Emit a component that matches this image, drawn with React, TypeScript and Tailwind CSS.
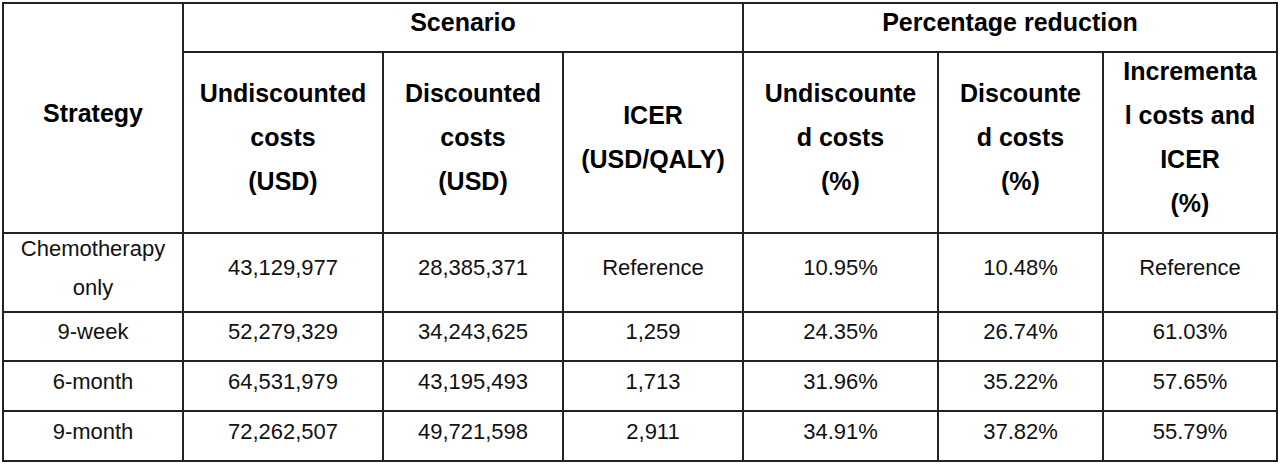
import { Fragment } from "react";

const rows = [
  { name: ["Chemotherapy", "only"], vals: ["43,129,977", "28,385,371", "Reference", "10.95%", "10.48%", "Reference"] },
  { name: ["9-week"], vals: ["52,279,329", "34,243,625", "1,259", "24.35%", "26.74%", "61.03%"] },
  { name: ["6-month"], vals: ["64,531,979", "43,195,493", "1,713", "31.96%", "35.22%", "57.65%"] },
  { name: ["9-month"], vals: ["72,262,507", "49,721,598", "2,911", "34.91%", "37.82%", "55.79%"] },
];

// header text is broken by hand, the way the source table wraps it
const subHeads = [
  ["Undiscounted", "costs", "(USD)"],
  ["Discounted", "costs", "(USD)"],
  ["ICER", "(USD/QALY)"],
  ["Undiscounte", "d costs", "(%)"],
  ["Discounte", "d costs", "(%)"],
  ["Incrementa", "l costs and", "ICER", "(%)"],
];

const Head = ({ lines, className = "" }: { lines: string[]; className?: string }) => (
  <div className={`bg-white flex items-center justify-center text-center font-bold text-[25px] leading-[44px] text-black ${className}`}>
    <div>
      {lines.map((l) => (
        <div key={l}>{l}</div>
      ))}
    </div>
  </div>
);

const Cell = ({ lines }: { lines: string[] }) => (
  <div className="bg-white flex items-center justify-center text-center text-[22px] leading-[39px] text-[#111] pb-[10px]">
    <div>
      {lines.map((l) => (
        <div key={l}>{l}</div>
      ))}
    </div>
  </div>
);

export default function App() {
  return (
    <div className="w-[1280px] h-[464px] bg-white pt-[2px] pl-[2px]" style={{ fontFamily: '"Liberation Sans", Arial, sans-serif' }}>
      <div className="inline-grid bg-[#222] p-[2px] gap-[2px] grid-cols-[178px_198px_178px_178px_193px_163px_172px] grid-rows-[47px_179px_77px_47px_48px_48px]">
        <Head lines={["Strategy"]} className="row-span-2 pb-[10px]" />
        <Head lines={["Scenario"]} className="col-span-3 pb-[12px]" />
        <Head lines={["Percentage reduction"]} className="col-span-3 pb-[12px]" />
        {subHeads.map((h) => (
          <Head key={h.join()} lines={h} className="pb-[11px]" />
        ))}
        {rows.map((r) => (
          <Fragment key={r.name.join()}>
            <Cell lines={r.name} />
            {r.vals.map((v, i) => (
              <Cell key={i} lines={[v]} />
            ))}
          </Fragment>
        ))}
      </div>
    </div>
  );
}
